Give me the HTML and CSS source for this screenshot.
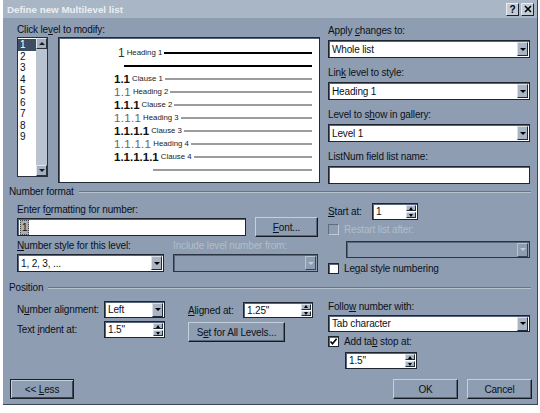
FILE: index.html
```html
<!DOCTYPE html>
<html>
<head>
<meta charset="utf-8">
<link rel="stylesheet" href="styles.css">
</head>
<body>
<div class="dialog">
  <div class="titlebar">
    <span class="title">Define new Multilevel list</span>
    <div class="tbtns">
      <span class="tbtn">?</span>
      <span class="tbtn"><svg width="8" height="8" viewBox="0 0 8 8"><path d="M1 1 L7 7 M7 1 L1 7" stroke="#000" stroke-width="1.6"/></svg></span>
    </div>
  </div>

  <div class="top">
    <div class="levels">
      <div class="lbl">Click le<u>v</u>el to modify:</div>
      <div class="levels-row">
        <div class="listbox">
          <div class="items">
            <div class="item sel">1</div>
            <div class="item">2</div>
            <div class="item">3</div>
            <div class="item">4</div>
            <div class="item">5</div>
            <div class="item">6</div>
            <div class="item">7</div>
            <div class="item">8</div>
            <div class="item">9</div>
          </div>
          <div class="vscroll">
            <span class="sbtn up"></span>
            <span class="sbtn down"></span>
          </div>
        </div>
        <div class="preview">
          <div class="prow first"><span class="num h1">1</span><span class="cap">Heading 1</span><span class="rule dark"></span></div>
          <div class="prow"><span class="rule dark only"></span></div>
          <div class="prow"><span class="num">1.1</span><span class="cap">Clause 1</span><span class="rule"></span></div>
          <div class="prow"><span class="num h">1.1</span><span class="cap">Heading 2</span><span class="rule"></span></div>
          <div class="prow"><span class="num">1.1.1</span><span class="cap">Clause 2</span><span class="rule"></span></div>
          <div class="prow"><span class="num h">1.1.1</span><span class="cap">Heading 3</span><span class="rule"></span></div>
          <div class="prow"><span class="num">1.1.1.1</span><span class="cap">Clause 3</span><span class="rule"></span></div>
          <div class="prow"><span class="num h">1.1.1.1</span><span class="cap">Heading 4</span><span class="rule"></span></div>
          <div class="prow"><span class="num">1.1.1.1.1</span><span class="cap">Clause 4</span><span class="rule"></span></div>
          <div class="prow"><span class="rule last"></span></div>
        </div>
      </div>
    </div>

    <div class="rightcol">
      <div class="fblock">
        <div class="lbl">Apply <u>c</u>hanges to:</div>
        <div class="combo"><span class="val">Whole list</span><span class="arrow"></span></div>
      </div>
      <div class="fblock">
        <div class="lbl">Lin<u>k</u> level to style:</div>
        <div class="combo"><span class="val">Heading 1</span><span class="arrow"></span></div>
      </div>
      <div class="fblock">
        <div class="lbl">Level to s<u>h</u>ow in gallery:</div>
        <div class="combo"><span class="val">Level 1</span><span class="arrow"></span></div>
      </div>
      <div class="fblock last">
        <div class="lbl">ListNum field list name:</div>
        <div class="tbox"></div>
      </div>
    </div>
  </div>

  <div class="ghead"><span>Number format</span></div>

  <div class="nf">
    <div class="nf-left">
      <div class="lbl13">Enter f<u>o</u>rmatting for number:</div>
      <div class="row-input">
        <div class="tbox wide"><span class="selnum">1</span></div>
        <div class="btn font"><span><u>F</u>ont...</span></div>
      </div>
      <div class="row-labels">
        <span class="lbl-a"><u>N</u>umber style for this level:</span>
        <span class="dis">Include level number from:</span>
      </div>
      <div class="row-combos">
        <div class="combo c147"><span class="val">1, 2, 3, ...</span><span class="arrow"></span></div>
        <div class="combo disabled c145"><span class="val"></span><span class="arrow"></span></div>
      </div>
    </div>
    <div class="nf-right">
      <div class="start-row">
        <span class="start-lbl"><u>S</u>tart at:</span>
        <div class="spin w46"><span class="val">1</span><span class="sbtns"><span class="sb up"></span><span class="sb down"></span></span></div>
      </div>
      <div class="chk-row r1"><span class="chk dis"></span><span class="dis">Restart list after:</span></div>
      <div class="combo disabled restart"><span class="val"></span><span class="arrow"></span></div>
      <div class="chk-row r2"><span class="chk"></span><span>Le<u>g</u>al style numbering</span></div>
    </div>
  </div>

  <div class="ghead pos-head"><span>Position</span></div>

  <div class="pos">
    <div class="colA">
      <div class="prow2">
        <span class="lblA">N<u>u</u>mber alignment:</span>
        <div class="combo w61"><span class="val">Left</span><span class="arrow"></span></div>
      </div>
      <div class="prow2 second">
        <span class="lblA">Text <u>i</u>ndent at:</span>
        <div class="spin w61"><span class="val">1.5"</span><span class="sbtns"><span class="sb up"></span><span class="sb down"></span></span></div>
      </div>
    </div>
    <div class="colB">
      <div class="prow2 b1">
        <span class="lblB"><u>A</u>ligned at:</span>
        <div class="spin w70"><span class="val">1.25"</span><span class="sbtns"><span class="sb up"></span><span class="sb down"></span></span></div>
      </div>
      <div class="btn setall"><span>S<u>e</u>t for All Levels...</span></div>
    </div>
    <div class="colC">
      <div class="lbl13">Follo<u>w</u> number with:</div>
      <div class="combo follow"><span class="val">Tab character</span><span class="arrow"></span></div>
      <div class="chk-row r3"><span class="chk"><svg width="9" height="9" viewBox="0 0 9 9"><path d="M1.5 4.5 L3.5 6.8 L7.6 1.8" fill="none" stroke="#000" stroke-width="1.6"/></svg></span><span>Add ta<u>b</u> stop at:</span></div>
      <div class="spin tabstop"><span class="val">1.5"</span><span class="sbtns"><span class="sb up"></span><span class="sb down"></span></span></div>
    </div>
  </div>

  <div class="footer">
    <div class="btn less"><span>&lt;&lt; <u>L</u>ess</span></div>
    <div class="spacer"></div>
    <div class="btn ok"><span>OK</span></div>
    <div class="btn cancel"><span>Cancel</span></div>
  </div>
</div>
</body>
</html>
```

FILE: styles.css
```css
* { box-sizing: border-box; }
html, body { margin: 0; padding: 0; background: #ffffff; }
body {
  font-family: "Liberation Sans", Arial, sans-serif;
  font-size: 10px;
  letter-spacing: -0.15px;
  color: #0a111a;
}
u { text-decoration: underline; }

.dialog {
  margin-left: 3px;
  width: 535px;
  height: 405px;
  background: #8e9db1;
  border-right: 1px solid #3c4655;
  border-bottom: 1px solid #3c4655;
}

/* title bar */
.titlebar {
  height: 18px;
  background: #a9b6c6;
  display: flex;
  align-items: center;
  justify-content: space-between;
  padding: 0 3px 0 4px;
}
.title { color: #e9eef3; font-weight: bold; font-size: 9.8px; letter-spacing: 0; }
.tbtns { display: flex; gap: 2px; }
.tbtn {
  width: 13px; height: 13px;
  background: #c3ccd7;
  border: 1px solid;
  border-color: #e8edf2 #1c232d #1c232d #e8edf2;
  display: flex; align-items: center; justify-content: center;
  font-weight: bold; font-size: 10px; color: #000;
}

/* top area */
.top { display: flex; padding: 5px 0 0 14px; height: 165px; }
.levels { width: 303px; }
.lbl { height: 14px; line-height: 14px; white-space: nowrap; }
.lbl13 { height: 13px; line-height: 13px; white-space: nowrap; }
.levels-row { display: flex; gap: 10px; }

.listbox {
  width: 31px; height: 140px;
  background: #fff;
  border: 1px solid #27303c;
  display: flex;
}
.items { flex: 1; padding-top: 1px; }
.item { height: 11.5px; line-height: 11.5px; padding-left: 2px; }
.item.sel { background: #3e4d62; color: #fff; }
.vscroll {
  width: 11px;
  background: #b9c4d0;
  display: flex; flex-direction: column; justify-content: space-between;
}
.sbtn {
  height: 11px;
  background: #a3b0c0;
  border: 1px solid;
  border-color: #dfe5ec #2a323e #2a323e #dfe5ec;
  display: flex; align-items: center; justify-content: center;
}
.sbtn.up::after { content: ""; border-left: 3px solid transparent; border-right: 3px solid transparent; border-bottom: 3px solid #1a1a1a; }
.sbtn.down::after { content: ""; border-left: 3px solid transparent; border-right: 3px solid transparent; border-top: 3px solid #1a1a1a; }

.preview {
  width: 262px; height: 146px;
  background: #fff;
  border: 1px solid #222a35;
  box-shadow: inset 1px 1px 0 #56627a;
  padding: 8px 7px 0 55px;
  letter-spacing: 0;
}
.prow { height: 13px; display: flex; align-items: center; white-space: nowrap; }
.num { font-size: 11.5px; font-weight: bold; color: #111; }
.num.h { font-weight: normal; color: #666; letter-spacing: 0.3px; }
.num.h1 { font-weight: normal; color: #333; font-size: 12px; margin-left: 4px; }
.cap { font-size: 7.8px; color: #222; margin-left: 2px; }
.rule { flex: 1; height: 2px; background: #9c9c9c; margin-left: 2px; }
.rule.dark { background: #000; height: 2px; }
.rule.only { margin-left: 10px; }
.rule.last { margin-left: 39px; }

.rightcol { margin-left: 8px; width: 202px; padding-top: 1px; }
.fblock { margin-bottom: 8px; }
.fblock.last { margin-bottom: 0; }
.fblock .lbl { margin-bottom: 2px; }

/* controls */
.combo {
  height: 18px;
  background: #fff;
  border: 1px solid #1d2530;
  box-shadow: inset 1px 1px 0 #58647a;
  display: flex; align-items: center;
  padding: 0 1px 0 3px;
  white-space: nowrap;
}
.combo .val { flex: 1; }
.arrow {
  width: 11px; height: 14px;
  background: #a9b5c4;
  border: 1px solid;
  border-color: #d9e0e8 #222a35 #222a35 #d9e0e8;
  display: flex; align-items: center; justify-content: center;
}
.arrow::after { content: ""; border-left: 3px solid transparent; border-right: 3px solid transparent; border-top: 3px solid #000; }
.combo.disabled { background: #8e9db1; border-color: #2b3442; box-shadow: inset 1px 1px 0 #5a6679; }
.combo.disabled .arrow { background: #8e9db1; border-color: #b9c4d0 #3a4452 #3a4452 #b9c4d0; }
.combo.disabled .arrow::after { border-top-color: #c3cdd8; }

.tbox {
  height: 18px;
  background: #fff;
  border: 1px solid #1d2530;
  box-shadow: inset 1px 1px 0 #58647a;
  display: flex; align-items: center;
  padding-left: 2px;
}
.selnum { background: #a5aeb9; color: #111; padding: 0 1px; line-height: 13px; border: 1px dotted #444; }

.spin {
  height: 17px;
  background: #fff;
  border: 1px solid #1d2530;
  box-shadow: inset 1px 1px 0 #58647a;
  display: flex; align-items: center;
  padding: 1px 1px 1px 3px;
}
.spin .val { flex: 1; }
.sbtns { width: 10px; height: 100%; display: flex; flex-direction: column; gap: 1px; }
.sb {
  flex: 1;
  background: #a9b5c4;
  border: 1px solid;
  border-color: #d9e0e8 #222a35 #222a35 #d9e0e8;
  display: flex; align-items: center; justify-content: center;
}
.sb.up::after { content: ""; border-left: 2.5px solid transparent; border-right: 2.5px solid transparent; border-bottom: 3px solid #000; }
.sb.down::after { content: ""; border-left: 2.5px solid transparent; border-right: 2.5px solid transparent; border-top: 3px solid #000; }

.chk {
  width: 11px; height: 11px;
  background: #fff;
  border: 1px solid #1d2530;
  box-shadow: inset 1px 1px 0 #58647a;
  margin-right: 5px;
  display: flex; align-items: center; justify-content: center;
  flex: none;
}
.chk.dis { background: #8e9db1; border-color: #606c7e #c0cad6 #c0cad6 #606c7e; box-shadow: none; }
.dis { color: #b3bdca; }

.btn {
  height: 20px;
  background: #8e9db1;
  border: 1px solid;
  border-color: #c6d0db #151b23 #151b23 #c6d0db;
  box-shadow: inset -1px -1px 0 #5a6678;
  display: flex; align-items: center; justify-content: center;
  white-space: nowrap;
}

/* group headers */
.ghead {
  display: flex; align-items: center;
  height: 13px;
  margin-top: 2px;
  padding: 0 6px 0 6px;
  white-space: nowrap;
}
.ghead::after {
  content: "";
  flex: 1;
  margin-left: 5px;
  border-top: 1px solid #667389;
  border-bottom: 1px solid #b8c3d0;
}
.pos-head { margin-top: 7px; }

/* number format */
.nf { display: flex; padding-left: 14px; }
.nf-left { width: 301px; padding-top: 5px; }
.row-input { display: flex; align-items: center; gap: 9px; margin-top: 1px; height: 20px; }
.tbox.wide { width: 229px; }
.btn.font { width: 63px; }
.row-labels { display: flex; margin-top: 2px; height: 13px; line-height: 13px; white-space: nowrap; }
.lbl-a { width: 156px; }
.row-combos { display: flex; gap: 9px; margin-top: 2px; }
.c147 { width: 147px; }
.c145 { width: 145px; }

.nf-right { margin-left: 10px; width: 202px; padding-top: 5px; }
.start-row { display: flex; align-items: center; height: 17px; }
.start-lbl { width: 44px; }
.w46 { width: 46px; }
.chk-row { display: flex; align-items: center; height: 11px; white-space: nowrap; }
.chk-row.r1 { margin-top: 4px; }
.combo.restart { margin-top: 6px; margin-left: 18px; width: 184px; height: 17px; }
.chk-row.r2 { margin-top: 5px; }

/* position */
.pos { display: flex; padding-left: 14px; }
.colA { width: 148px; padding-top: 7px; }
.prow2 { display: flex; align-items: center; white-space: nowrap; }
.prow2.second { margin-top: 3px; }
.lblA { width: 87px; }
.w61 { width: 61px; }
.combo.w61 { height: 17px; }
.colB { margin-left: 23px; width: 125px; padding-top: 8px; }
.lblB { width: 55px; }
.w70 { width: 70px; height: 16px; }
.btn.setall { width: 97px; margin-top: 4px; }
.colC { margin-left: 15px; width: 202px; padding-top: 6px; }
.combo.follow { margin-top: 2px; height: 17px; }
.chk-row.r3 { margin-top: 4px; }
.spin.tabstop { margin-top: 5px; margin-left: 17px; width: 72px; }

/* footer */
.footer { display: flex; margin-top: 10px; padding: 0 5px 0 7px; }
.spacer { flex: 1; }
.btn.less { width: 64px; border-color: #1a2029; box-shadow: inset 1px 1px 0 #c6d0db, inset -1px -1px 0 #3c4655; }
.btn.ok { width: 65px; margin-right: 9px; }
.btn.cancel { width: 65px; }
```
